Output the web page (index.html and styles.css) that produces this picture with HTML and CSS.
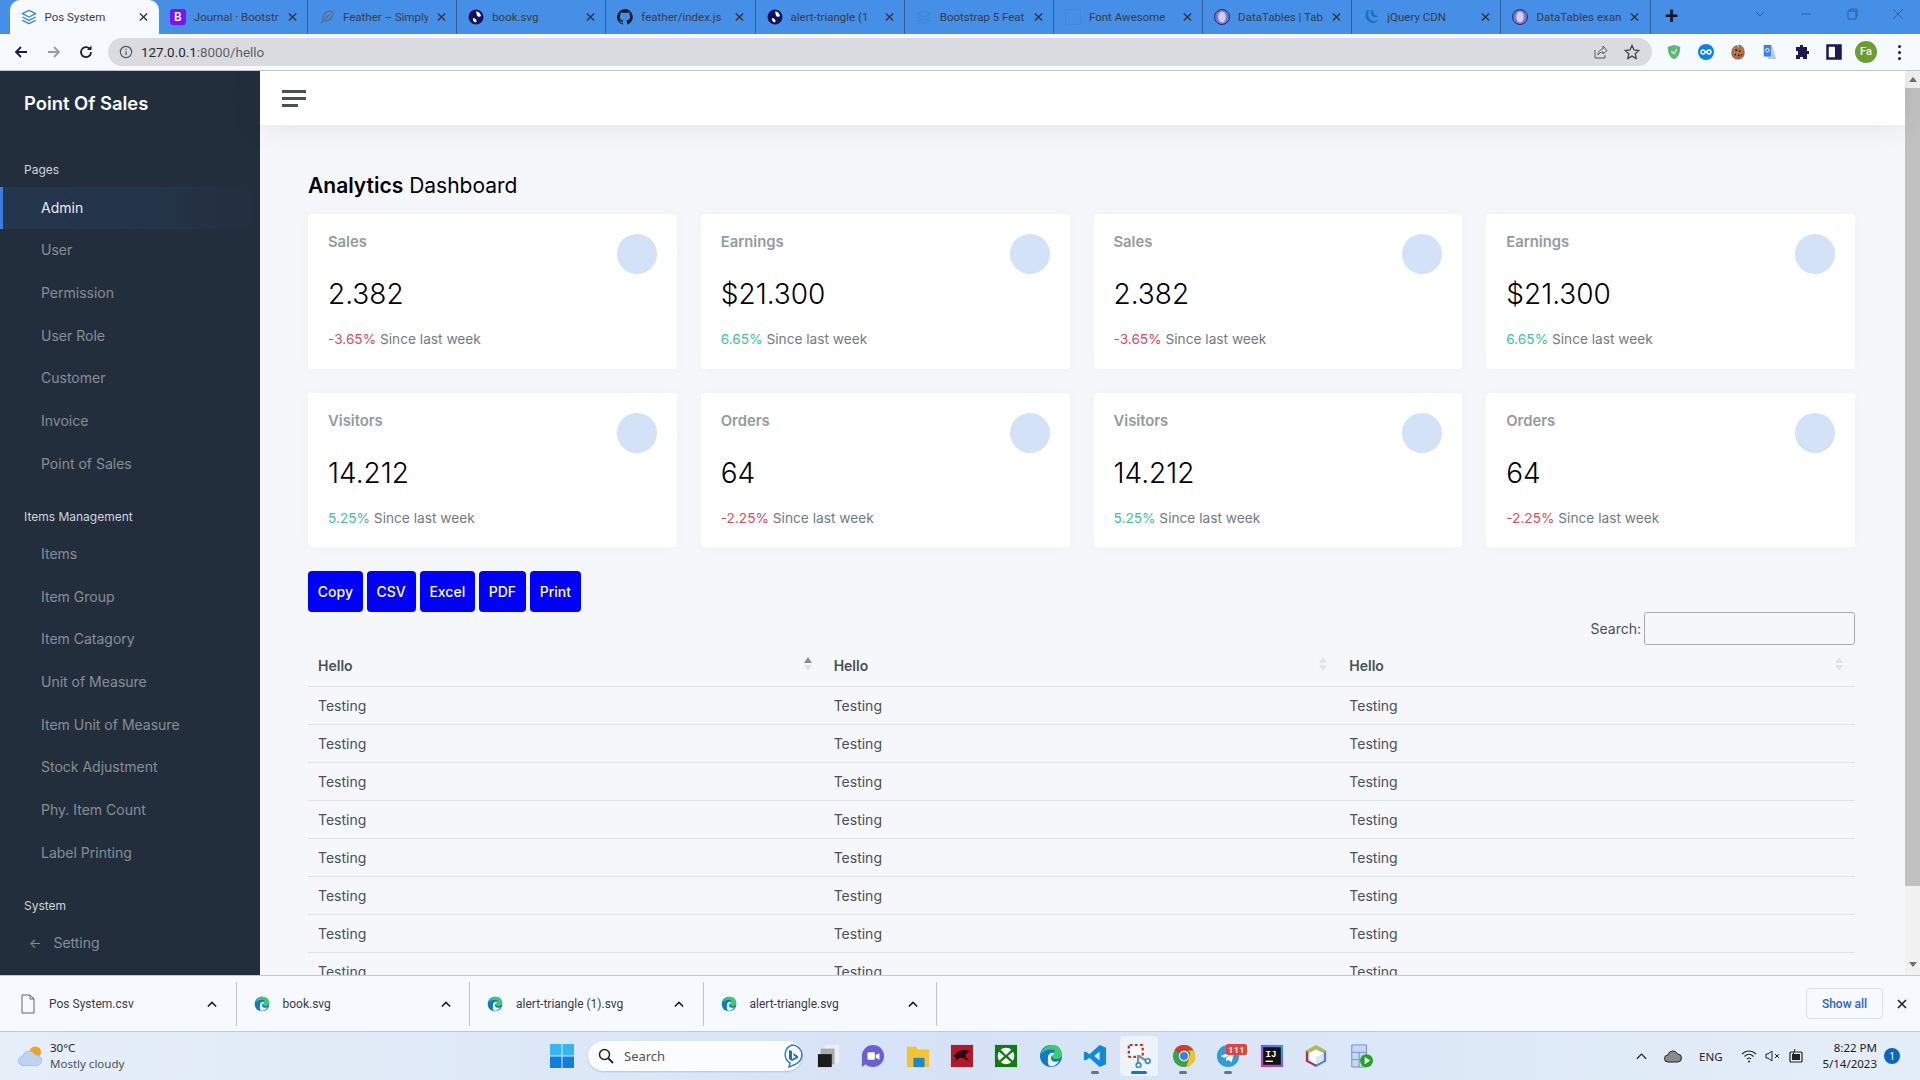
FILE: index.html
```html
<!DOCTYPE html>
<html lang="en">
<head>
  <meta charset="UTF-8" />
  <meta name="viewport" content="width=device-width, initial-scale=1.0" />
  <title>Pos System</title>
  <link rel="stylesheet" href="styles.css">
</head>
<body>
  <svg class="defs" width="0" height="0">
    <defs>
      <linearGradient id="g-ij" x1="0" y1="1" x2="1" y2="0"><stop offset="0" stop-color="#e8358a"/><stop offset=".5" stop-color="#7a5ce0"/><stop offset="1" stop-color="#2f9be8"/></linearGradient>
    </defs>
    <symbol id="i-layers" viewBox="0 0 24 24"><path d="M12 2 2 7l10 5 10-5zM2 12l10 5 10-5M2 17l10 5 10-5" fill="none" stroke="#3b87d8" stroke-width="2" stroke-linejoin="round"/></symbol>
    <symbol id="i-globe" viewBox="0 0 16 16"><circle cx="8" cy="8" r="7.5" fill="#14125e"/><path d="M8 2.500c2.500 0 4.800 1.800 5 4.500-1 1-2.500 1-3.500.2C8.500 6.400 8.600 4 8 2.500zM5 9c1.500 0 3 1 3.500 2.500.2.800-.3 1.800-1 2C5.500 13 4.500 11 5 9z" fill="#fff"/></symbol>
    <symbol id="i-dt" viewBox="0 0 16 16"><circle cx="8" cy="8" r="7.5" fill="#7a76c9" stroke="#2b2a63"/><ellipse cx="8" cy="8" rx="3.8" ry="5.5" fill="#cfcdf0"/></symbol>
    <symbol id="i-edge" viewBox="0 0 24 24"><circle cx="12" cy="12" r="11" fill="#0f7ac6"/><path d="M2 10C4 3 10 1 14 1c6 0 9 5 9 10 0 3-3 4-6 4-2 0-4-1-4-3 0-3 3-3 3-5-3-3-11-1-14 3z" fill="#41c96f"/><path d="M9 13c0-3 3-5 6-4 0 2-3 2-3 5s3 5 8 3c-2 4-6 6-9 5-3-1-2-6-2-9z" fill="#fff" opacity=".9"/></symbol>
    <symbol id="i-chev" viewBox="0 0 12 8"><path d="M1 7l5-5 5 5" fill="none" stroke="#1d1752" stroke-width="2"/></symbol>
    <symbol id="i-x" viewBox="0 0 10 10"><path d="M1 1l8 8M9 1l-8 8" fill="none" stroke="currentColor" stroke-width="1.6"/></symbol>
  </svg>

  <div class="tabstrip">
    <div class="tab tab-active">
      <svg class="tab-icon"><use href="#i-layers"/></svg>
      <span class="tab-text">Pos System</span><svg class="tab-x"><use href="#i-x"/></svg>
    </div>
    <div class="tab">
      <span class="tab-icon bs-icon">B</span>
      <span class="tab-text">Journal · Bootstr</span><svg class="tab-x"><use href="#i-x"/></svg>
    </div>
    <div class="tab">
      <svg class="tab-icon" viewBox="0 0 24 24"><path d="M20 4c-4-2-10 0-12 4-2 3-2 7-2 10l-3 3M6 18c4 0 8 0 11-3 3-3 5-8 3-11M9 15l7-7" fill="none" stroke="#666" stroke-width="1.6"/></svg>
      <span class="tab-text">Feather – Simply</span><svg class="tab-x"><use href="#i-x"/></svg>
    </div>
    <div class="tab">
      <svg class="tab-icon"><use href="#i-globe"/></svg>
      <span class="tab-text">book.svg</span><svg class="tab-x"><use href="#i-x"/></svg>
    </div>
    <div class="tab">
      <svg class="tab-icon" viewBox="0 0 16 16"><path fill="#1b1f23" d="M8 0a8 8 0 0 0-2.500 15.600c.4 0 .5-.2.5-.4v-1.400c-2.200.5-2.700-1-2.700-1-.4-.9-.9-1.200-.9-1.200-.7-.5.100-.5.100-.5.800.1 1.200.8 1.200.8.700 1.200 1.900.9 2.300.7.100-.5.300-.9.500-1.100-1.800-.2-3.600-.9-3.600-4 0-.9.300-1.600.8-2.100-.1-.2-.4-1 .1-2.100 0 0 .7-.2 2.200.8a7.600 7.600 0 0 1 4 0c1.500-1 2.200-.8 2.200-.8.400 1.100.2 1.900.1 2.100.5.600.8 1.300.8 2.100 0 3.100-1.900 3.700-3.700 3.900.3.300.6.800.6 1.500v2.200c0 .2.100.5.600.4A8 8 0 0 0 8 0z"/></svg>
      <span class="tab-text">feather/index.js</span><svg class="tab-x"><use href="#i-x"/></svg>
    </div>
    <div class="tab">
      <svg class="tab-icon"><use href="#i-globe"/></svg>
      <span class="tab-text">alert-triangle (1</span><svg class="tab-x"><use href="#i-x"/></svg>
    </div>
    <div class="tab">
      <svg class="tab-icon tab-icon-dim"><use href="#i-layers"/></svg>
      <span class="tab-text">Bootstrap 5 Feat</span><svg class="tab-x"><use href="#i-x"/></svg>
    </div>
    <div class="tab">
      <span class="tab-icon fa-icon"></span>
      <span class="tab-text">Font Awesome</span><svg class="tab-x"><use href="#i-x"/></svg>
    </div>
    <div class="tab">
      <svg class="tab-icon"><use href="#i-dt"/></svg>
      <span class="tab-text">DataTables | Tab</span><svg class="tab-x"><use href="#i-x"/></svg>
    </div>
    <div class="tab">
      <svg class="tab-icon" viewBox="0 0 16 16"><path d="M4 1C1 6 3 13 9 14c3 .5 5-1 6-3-3 2-7 1-9-2C5 6 5 3 6 1zM8 1c-1 3 0 6 3 7 1 .4 3 .2 4-1-3 0-5-3-5-6z" fill="#1a73b5"/></svg>
      <span class="tab-text">jQuery CDN</span><svg class="tab-x"><use href="#i-x"/></svg>
    </div>
    <div class="tab">
      <svg class="tab-icon"><use href="#i-dt"/></svg>
      <span class="tab-text">DataTables exan</span><svg class="tab-x"><use href="#i-x"/></svg>
    </div>
    <span class="tab-new">+</span>
    <div class="win-controls">
      <svg class="win-btn" viewBox="0 0 12 12"><path d="M2 4l4 4 4-4" fill="none" stroke="#2c5f9e"/></svg>
      <svg class="win-btn" viewBox="0 0 12 12"><path d="M1 6h10" stroke="#2c5f9e"/></svg>
      <svg class="win-btn" viewBox="0 0 12 12"><path d="M2 3h8v8H2zM4 3V1h7v7h-1" fill="none" stroke="#2c5f9e"/></svg>
      <svg class="win-btn" viewBox="0 0 12 12"><path d="M1 1l10 10M11 1L1 11" stroke="#2c5f9e"/></svg>
    </div>
  </div>

  <div class="toolbar">
    <svg class="nav-btn" viewBox="0 0 16 16"><path d="M14 8H3M8 3L3 8l5 5" fill="none" stroke="#1d1752" stroke-width="1.800"/></svg>
    <svg class="nav-btn" viewBox="0 0 16 16"><path d="M2 8h11M8 3l5 5-5 5" fill="none" stroke="#9a97b4" stroke-width="1.800"/></svg>
    <svg class="nav-btn" viewBox="0 0 16 16"><path d="M13 8a5 5 0 1 1-1.500-3.500" fill="none" stroke="#1d1752" stroke-width="1.800"/><path d="M13.500 1.500V6H9z" fill="#1d1752"/></svg>
    <div class="omnibox">
      <svg class="omni-info" viewBox="0 0 16 16"><circle cx="8" cy="8" r="6.500" fill="none" stroke="#55565c" stroke-width="1.300"/><path d="M8 7v4.500M8 4.300v1.400" stroke="#55565c" stroke-width="1.400"/></svg>
      <span class="omni-url">127.0.0.1<span class="omni-path">:8000/hello</span></span>
      <svg class="omni-share" viewBox="0 0 16 16"><path d="M3 6v8h10v-3M6 11c0-4 3-6 5-6V2l4 4.500L11 10V8c-2 0-4 1-5 3z" fill="none" stroke="#55565c"/></svg>
      <svg class="omni-star" viewBox="0 0 16 16"><path d="M8 1.500l2 4.500 4.800.5-3.600 3.200 1 4.800L8 12.100l-4.200 2.400 1-4.800L1.200 6.500 6 6z" fill="none" stroke="#44454b" stroke-width="1.300"/></svg>
    </div>
    <div class="extensions">
      <svg class="ext" viewBox="0 0 16 18"><path d="M8 1l7 2c0 7-2 12-7 14C3 15 1 10 1 3z" fill="#5cb874"/><path d="M5 8l3 3 3-5" fill="none" stroke="#d9f2e0" stroke-width="1.500"/></svg>
      <svg class="ext" viewBox="0 0 16 16"><circle cx="8" cy="8" r="8" fill="#0d7ff2"/><path d="M7 8a2 2 0 1 1-.7-1.500L9.700 9.500A2 2 0 1 0 9 8" fill="none" stroke="#fff" stroke-width="1.500"/></svg>
      <svg class="ext" viewBox="0 0 16 18"><path d="M9 1c5 1 6 6 6 9 0 4-3 7-7 7s-7-3-7-7c0-5 3-8 6-8 0 2 1 3 2 3z" fill="#b57648" stroke="#4b2c15" stroke-width=".6"/><g fill="#2b1608"><circle cx="6" cy="7" r="1.200"/><circle cx="10" cy="8" r="1"/><circle cx="5" cy="12" r="1"/><circle cx="9" cy="13" r="1.200"/><circle cx="12" cy="12" r=".8"/></g></svg>
      <svg class="ext" viewBox="0 0 16 18"><path d="M1 1h9l5 16H6l-1-3H1z" fill="#b4c9ee"/><path d="M1 1h8v13H1z" fill="#3f7fe8"/><circle cx="5" cy="7" r="2" fill="none" stroke="#fff"/></svg>
      <svg class="ext" viewBox="0 0 16 16"><path d="M6 1h3v2h4v4h2v3h-2v5H9v-2H6v2H2v-4h2V7H2V3h4z" fill="#1d1752"/></svg>
      <svg class="ext" viewBox="0 0 16 16"><rect x="1.500" y="1.500" width="13" height="13" fill="none" stroke="#1d1752" stroke-width="2.500"/><rect x="9" y="2" width="5" height="12" fill="#1d1752"/></svg>
      <span class="avatar">Fa</span>
      <span class="menu-dots"><i></i><i></i><i></i></span>
    </div>
  </div>

  <div class="page">
    <aside class="sidebar">
      <div class="brand">Point Of Sales</div>
      <div class="side-header">Pages</div>
      <a class="side-link active">Admin</a>
      <a class="side-link">User</a>
      <a class="side-link">Permission</a>
      <a class="side-link">User Role</a>
      <a class="side-link">Customer</a>
      <a class="side-link">Invoice</a>
      <a class="side-link">Point of Sales</a>
      <div class="side-header">Items Management</div>
      <a class="side-link">Items</a>
      <a class="side-link">Item Group</a>
      <a class="side-link">Item Catagory</a>
      <a class="side-link">Unit of Measure</a>
      <a class="side-link">Item Unit of Measure</a>
      <a class="side-link">Stock Adjustment</a>
      <a class="side-link">Phy. Item Count</a>
      <a class="side-link">Label Printing</a>
      <div class="side-header">System</div>
      <a class="side-link side-link-arrow"><span class="side-arrow">←</span>Setting</a>
    </aside>

    <div class="main">
      <nav class="navbar">
        <span class="hamburger"><i></i><i></i><i class="short"></i></span>
      </nav>
      <div class="content">
        <h1 class="title"><strong>Analytics</strong> Dashboard</h1>
        <div class="cards">
          <div class="card">
            <div class="card-head"><span class="card-title">Sales</span><span class="card-dot"></span></div>
            <div class="card-value">2.382</div>
            <div class="card-note"><span class="down">-3.65%</span> Since last week</div>
          </div>
          <div class="card">
            <div class="card-head"><span class="card-title">Earnings</span><span class="card-dot"></span></div>
            <div class="card-value">$21.300</div>
            <div class="card-note"><span class="up">6.65%</span> Since last week</div>
          </div>
          <div class="card">
            <div class="card-head"><span class="card-title">Sales</span><span class="card-dot"></span></div>
            <div class="card-value">2.382</div>
            <div class="card-note"><span class="down">-3.65%</span> Since last week</div>
          </div>
          <div class="card">
            <div class="card-head"><span class="card-title">Earnings</span><span class="card-dot"></span></div>
            <div class="card-value">$21.300</div>
            <div class="card-note"><span class="up">6.65%</span> Since last week</div>
          </div>
          <div class="card">
            <div class="card-head"><span class="card-title">Visitors</span><span class="card-dot"></span></div>
            <div class="card-value">14.212</div>
            <div class="card-note"><span class="up">5.25%</span> Since last week</div>
          </div>
          <div class="card">
            <div class="card-head"><span class="card-title">Orders</span><span class="card-dot"></span></div>
            <div class="card-value">64</div>
            <div class="card-note"><span class="down">-2.25%</span> Since last week</div>
          </div>
          <div class="card">
            <div class="card-head"><span class="card-title">Visitors</span><span class="card-dot"></span></div>
            <div class="card-value">14.212</div>
            <div class="card-note"><span class="up">5.25%</span> Since last week</div>
          </div>
          <div class="card">
            <div class="card-head"><span class="card-title">Orders</span><span class="card-dot"></span></div>
            <div class="card-value">64</div>
            <div class="card-note"><span class="down">-2.25%</span> Since last week</div>
          </div>
        </div>

        <div class="dt-buttons">
          <button>Copy</button><button>CSV</button><button>Excel</button><button>PDF</button><button>Print</button>
        </div>
        <div class="dt-search"><label>Search:</label><input type="text"></div>

        <table class="dt">
          <thead>
            <tr>
              <th><div class="th-in">Hello<span class="sort sort-asc"><i></i><b></b></span></div></th>
              <th><div class="th-in">Hello<span class="sort"><i></i><b></b></span></div></th>
              <th><div class="th-in">Hello<span class="sort"><i></i><b></b></span></div></th>
            </tr>
          </thead>
          <tbody>
            <tr><td>Testing</td><td>Testing</td><td>Testing</td></tr>
            <tr><td>Testing</td><td>Testing</td><td>Testing</td></tr>
            <tr><td>Testing</td><td>Testing</td><td>Testing</td></tr>
            <tr><td>Testing</td><td>Testing</td><td>Testing</td></tr>
            <tr><td>Testing</td><td>Testing</td><td>Testing</td></tr>
            <tr><td>Testing</td><td>Testing</td><td>Testing</td></tr>
            <tr><td>Testing</td><td>Testing</td><td>Testing</td></tr>
            <tr><td>Testing</td><td>Testing</td><td>Testing</td></tr>
          </tbody>
        </table>
      </div>
    </div>

    <div class="scrollbar">
      <span class="sb-up"></span>
      <span class="sb-thumb"></span>
      <span class="sb-down"></span>
    </div>
  </div>

  <div class="downloads">
    <div class="dl">
      <svg class="dl-icon" viewBox="0 0 14 20"><path d="M1 1h8l4 4v14H1zM9 1v4h4" fill="none" stroke="#66666c"/></svg>
      <span class="dl-name">Pos System.csv</span><svg class="dl-chev"><use href="#i-chev"/></svg>
    </div>
    <div class="dl">
      <svg class="dl-icon"><use href="#i-edge"/></svg>
      <span class="dl-name">book.svg</span><svg class="dl-chev"><use href="#i-chev"/></svg>
    </div>
    <div class="dl">
      <svg class="dl-icon"><use href="#i-edge"/></svg>
      <span class="dl-name">alert-triangle (1).svg</span><svg class="dl-chev"><use href="#i-chev"/></svg>
    </div>
    <div class="dl">
      <svg class="dl-icon"><use href="#i-edge"/></svg>
      <span class="dl-name">alert-triangle.svg</span><svg class="dl-chev"><use href="#i-chev"/></svg>
    </div>
    <button class="show-all">Show all</button>
    <svg class="dl-close"><use href="#i-x"/></svg>
  </div>

  <div class="taskbar">
    <div class="weather">
      <svg class="weather-icon" viewBox="0 0 26 24"><circle cx="18" cy="8" r="6" fill="#f5a31e"/><path d="M6 22a5 5 0 0 1-1-10 7 7 0 0 1 13-1 5.500 5.500 0 0 1 2 11z" fill="#bcd4f2" stroke="#8fb4e4" stroke-width=".7"/></svg>
      <div class="weather-text"><div>30°C</div><div class="weather-sub">Mostly cloudy</div></div>
    </div>
    <svg class="start" viewBox="0 0 24 24"><path fill="#35b8f2" d="M0 0h11.500v11.500H0zM12.500 0H24v11.500H12.500z"/><path fill="#0f80d6" d="M0 12.500h11.500V24H0zM12.500 12.500H24V24H12.500z"/></svg>
    <div class="task-search">
      <svg class="ts-glass" viewBox="0 0 16 16"><circle cx="6.500" cy="6.500" r="5" fill="none" stroke="#222" stroke-width="1.500"/><path d="M10 10l5 5" stroke="#222" stroke-width="1.800"/></svg>
      <span class="ts-text">Search</span>
      <svg class="ts-bing" viewBox="0 0 22 24"><path d="M11 1a10 10 0 0 1 3 19.500L8 23l1-4A10 10 0 0 1 11 1z" fill="#fff" stroke="#2b7fd8" stroke-width="1.500"/><path d="M8 6l3 1v8l4-2-2-1-1-3 5 3v2l-6 3-3-2z" fill="#1b6fc9"/></svg>
    </div>
    <div class="task-icons">
      <span class="ti"><svg viewBox="0 0 26 26"><rect x="8" y="1" width="16" height="20" rx="1" fill="#eee"/><rect x="4" y="5" width="15" height="17" fill="#aaa"/><rect x="1" y="11" width="15" height="14" fill="#1c1c1c"/></svg></span>
      <span class="ti"><svg viewBox="0 0 26 26"><path d="M13 1a12 12 0 0 1 0 24c-4 0-6-1-8-3L1 25V13A12 12 0 0 1 13 1z" fill="#6a5fd8"/><rect x="7" y="9" width="8" height="8" rx="1" fill="#fff"/><path d="M16 12l4-2v7l-4-2z" fill="#fff"/></svg></span>
      <span class="ti"><svg viewBox="0 0 26 26"><path d="M1 3h10l2 3h12v19H1z" fill="#f4c430"/><rect x="8" y="15" width="12" height="10" fill="#1f86d0"/></svg></span>
      <span class="ti"><svg viewBox="0 0 26 26"><rect x="1" y="1" width="24" height="24" fill="#b01a2b"/><path d="M4 13c5-6 9-8 18-5-4 1-5 3-5 5s3 4 4 6c-4-2-6-4-9-4s-4 3-6 4c1-3 1-4-2-6z" fill="#2a0a10"/></svg></span>
      <span class="ti"><svg viewBox="0 0 26 26"><rect x="1" y="1" width="24" height="24" fill="#107c10"/><circle cx="13" cy="13" r="9" fill="#fff"/><path d="M7 6l6 6 6-6 2 2-6 5 6 6-2 1-6-5-6 5-2-1 6-6-6-5z" fill="#107c10"/></svg></span>
      <span class="ti"><svg viewBox="0 0 24 24"><use href="#i-edge"/></svg></span>
      <span class="ti ti-open"><svg viewBox="0 0 26 26"><path d="M18 1l7 3v18l-7 3L7 15l-4 3-2-1V9l2-1 4 3zM18 8l-6 5 6 5z" fill="#0f8ad6"/></svg></span>
      <span class="ti ti-current"><svg viewBox="0 0 26 26"><rect x="2" y="1" width="15" height="13" rx="1" fill="#fff" stroke="#c8301f" stroke-width="2.500" stroke-dasharray="3 2.500"/><path d="M13 13l9 6M12 12v9" stroke="#8a9098" stroke-width="2.500"/><circle cx="22.500" cy="18.500" r="2.500" fill="#fff" stroke="#2a8fd8" stroke-width="1.800"/><circle cx="12.500" cy="23" r="2.500" fill="#fff" stroke="#2a8fd8" stroke-width="1.800"/></svg></span>
      <span class="ti ti-open"><svg viewBox="0 0 26 26"><circle cx="13" cy="13" r="12" fill="#3aa34a"/><path d="M13 1a12 12 0 0 1 10.400 6H13a6 6 0 0 0-5.500 3.500L3 6A12 12 0 0 1 13 1z" fill="#e0372d"/><path d="M23.400 7a12 12 0 0 1-8 17.800L19 14a6 6 0 0 0-1-7z" fill="#fcc419"/><circle cx="13" cy="13" r="5" fill="#3c7fe8" stroke="#fff" stroke-width="1.200"/></svg></span>
      <span class="ti ti-open"><svg viewBox="0 0 26 26"><circle cx="13" cy="13" r="12" fill="#2b9ed8"/><path d="M5 13l15-6-3 13-4-3-2 2v-4l5-4-7 4z" fill="#fff"/></svg><em class="ti-badge">111</em></span>
      <span class="ti"><svg viewBox="0 0 26 26"><rect x="1" y="1" width="24" height="24" fill="url(#g-ij)"/><rect x="3.500" y="3.500" width="19" height="19" fill="#111"/><text x="6" y="14" font-size="10" font-weight="700" fill="#fff" font-family="Liberation Mono, monospace">IJ</text><rect x="6" y="18" width="8" height="1.500" fill="#fff"/></svg></span>
      <span class="ti"><svg viewBox="0 0 26 26"><path d="M13 1l11 6-3 3-8-4-8 4-3-3z" fill="#a8bd52"/><path d="M2 7l3 3v8l8 4v3L2 19z" fill="#b3314e"/><path d="M24 7l-3 3v8l-8 4v3l11-6z" fill="#4f86d0"/><path d="M13 6l8 4v8l-8 4-8-4v-8z" fill="#fff"/><path d="M13 14l8-4v8l-8 4z" fill="#dfe3ea"/></svg></span>
      <span class="ti"><svg viewBox="0 0 26 26"><path d="M3 1h16v24H3z" fill="#c8d6f0" stroke="#6f8fc9"/><path d="M3 9h16M3 17h16M11 9v16" stroke="#6f8fc9"/><circle cx="19" cy="18" r="7" fill="#1fa51f"/><path d="M17 14l6 4-6 4z" fill="#fff"/></svg></span>
    </div>
    <div class="tray">
      <svg class="tray-caret" viewBox="0 0 12 8"><path d="M1 7l5-5 5 5" fill="none" stroke="#222" stroke-width="1.300"/></svg>
      <svg class="tray-cloud" viewBox="0 0 18 14"><path d="M4 13a3.500 3.500 0 0 1 0-7 5 5 0 0 1 9.500-1 4 4 0 0 1 0 8z" fill="#8b8b8b" stroke="#222"/></svg>
      <span class="tray-lang">ENG</span>
      <svg class="tray-sys" viewBox="0 0 16 14"><path d="M1 5c4-4 10-4 14 0M3.500 7.500c3-3 6-3 9 0M6 10c1.500-1.500 2.500-1.500 4 0" fill="none" stroke="#222" stroke-width="1.100"/><circle cx="8" cy="12.500" r="1" fill="#222"/></svg>
      <svg class="tray-sys" viewBox="0 0 16 14"><path d="M1 5h2l4-3v10L3 9H1z" fill="none" stroke="#222"/><path d="M10 5l4 4M14 5l-4 4" stroke="#222"/></svg>
      <svg class="tray-sys" viewBox="0 0 16 14"><rect x="1" y="3" width="12" height="10" rx="1" fill="none" stroke="#222" stroke-width="1.200"/><rect x="3" y="5" width="8" height="6" fill="#222"/><path d="M6 0L4 6h3l-1 4" fill="none" stroke="#222"/></svg>
      <div class="clock"><div>8:22 PM</div><div>5/14/2023</div></div>
      <span class="notif">1</span>
    </div>
  </div>
</body>
</html>
```

FILE: styles.css
```css
* { box-sizing: border-box; }
html, body { margin: 0; height: 100%; overflow: hidden; }
body { font-family: Inter, "Liberation Sans", sans-serif; background: #f5f7fb; color: #495057; display: flex; flex-direction: column; height: 1080px; }
.defs { position: absolute; }

/* browser tabs */
.tabstrip { height: 34px; background: #468fe6; display: flex; padding-left: 9.6px; font-family: Roboto, sans-serif; font-size: 11.5px; color: #3a3c44; flex: none; }
.tab { width: 149.2px; height: 34px; display: flex; align-items: center; padding-left: 11px; border-right: 1px solid #2f5f9c; }
.tab-active { background: #f6f9fe; border-right: 0; border-radius: 10px 10px 0 0; }
.tab-icon { width: 16px; height: 16px; flex: none; margin-right: 8px; }
.tab-icon-dim { opacity: .75; }
.bs-icon { background: #7a12f5; color: #fff; border-radius: 3px; font-size: 12px; line-height: 16px; text-align: center; font-weight: 500; }
.fa-icon { border: 1px solid #3f7cc8; opacity: .4; }
.tab-text { width: 85px; white-space: nowrap; overflow: hidden; flex: none; }
.tab-x { width: 9px; height: 10px; margin-left: 9px; color: #33343a; flex: none; }
.tab-new { width: 40px; text-align: center; font-size: 24px; font-weight: 500; color: #16161c; line-height: 32px; margin-left: 1px; }
.win-controls { margin-left: auto; display: flex; gap: 34px; padding: 8px 16px 0 0; }
.win-btn { width: 12px; height: 12px; }

/* url bar */
.toolbar { height: 36px; background: #f6f9fe; display: flex; align-items: center; padding: 0 0 0 13px; flex: none; }
.nav-btn { width: 16px; height: 16px; margin-right: 16.5px; flex: none; }
.omnibox { width: 1544px; height: 28px; margin-left: -2.5px; background: #dadbe0; border-radius: 14px; display: flex; align-items: center; padding: 0 12px 0 11px; font-family: Roboto, sans-serif; font-size: 13.4px; color: #26272c; }
.omni-info { width: 14px; height: 14px; margin-right: 8px; }
.omni-path { color: #5e5f66; }
.omni-share { width: 16px; height: 16px; margin-left: auto; margin-right: 16px; }
.omni-star { width: 16px; height: 16px; }
.extensions { display: flex; align-items: center; padding-left: 14px; }
.ext { width: 16px; height: 16px; margin-right: 16px; flex: none; }
.avatar { width: 22px; height: 22px; border-radius: 50%; background: #6a9e2f; color: #fff; font: 500 11px Roboto, sans-serif; line-height: 22px; text-align: center; margin-left: -3px; }
.menu-dots { display: flex; flex-direction: column; gap: 3px; margin-left: 21px; }
.menu-dots i { width: 3px; height: 3px; background: #1d1752; border-radius: 50%; }

/* page */
.page { flex: none; height: 905px; display: flex; overflow: hidden; border-top: 1px solid #c5c5d2; }
.sidebar { width: 260px; flex: none; background: #222e3c; color: #ced4da; }
.brand { font-size: 18.4px; font-weight: 600; color: #f8f9fa; line-height: 28px; padding: 18px 24px 43px; }
.side-header { font-size: 12px; line-height: 20.5px; padding: 21.2px 24px 6px; color: #ced4da; }
.brand + .side-header { padding-top: 0; }
.side-link { display: block; height: 42.7px; line-height: 42.7px; padding-left: 41px; font-size: 14px; color: rgba(233, 236, 239, .5); border-left: 3px solid transparent; text-indent: -3px; }
.side-link.active { color: #e9ecef; border-left-color: #3b7ddd; background: linear-gradient(90deg, rgba(59, 125, 221, .1), rgba(59, 125, 221, .0875) 50%, rgba(0, 0, 0, 0)); }
.side-link-arrow { padding-left: 29px; }
.side-arrow { margin-right: 12px; font-size: 13px; }

.main { flex: 1; min-width: 0; }
.navbar { height: 54px; background: #fff; box-shadow: 0 0 32px rgba(33, 37, 41, .1); display: flex; align-items: center; padding-left: 22px; position: relative; }
.hamburger { display: flex; flex-direction: column; gap: 4px; }
.hamburger i { width: 24px; height: 3px; background: #495057; display: block; }
.hamburger .short { width: 16px; }
.content { padding: 47.5px 50px 0 48px; }
.title { margin: 0 0 16.5px; font-size: 21px; font-weight: 400; line-height: 25px; color: #000; }
.title strong { font-weight: 600; }
.cards { display: grid; grid-template-columns: repeat(4, 1fr); gap: 24px; }
.card { background: #fff; border-radius: 4px; box-shadow: 0 0 14px rgba(33, 37, 41, .03); padding: 20px 20px 18.5px; height: 154.5px; }
.card-head { display: flex; justify-content: space-between; height: 40px; }
.card-title { font-size: 14.8px; font-weight: 600; line-height: 16px; color: #939ba2; }
.card-dot { width: 40px; height: 40px; border-radius: 50%; background: #d3e2f7; }
.card-value { font-size: 28px; font-weight: 300; line-height: 34px; color: #000; margin-top: 3px; }
.card-note { font-size: 13.7px; line-height: 22px; margin-top: 17px; color: #727b84; }
.down { color: #e04b5a; }
.up { color: #3cc4a0; }

.dt-buttons { display: flex; gap: 4px; margin-top: 24px; }
.dt-buttons button { height: 41px; padding: 0 9.8px; border: 0; border-radius: 4px; background: #00f; color: #fff; font: 500 14px Inter, sans-serif; }
.dt-search { display: flex; justify-content: flex-end; align-items: center; height: 33px; font-size: 14px; }
.dt-search label { margin-right: 3px; }
.dt-search input { width: 211px; height: 33px; border: 1px solid #aaa; border-radius: 3px; background: transparent; }
.dt { width: 100%; border-collapse: collapse; table-layout: fixed; font-size: 14px; }
.dt th { height: 41px; padding: 0 10px; text-align: left; font-weight: 600; border-bottom: 1px solid #dee2e6; color: #495057; }
.th-in { display: flex; justify-content: space-between; align-items: center; }
.sort { display: flex; flex-direction: column; gap: 2px; margin-right: 2px; margin-top: -2px; }
.sort i, .sort b { width: 0; height: 0; border-left: 4px solid transparent; border-right: 4px solid transparent; }
.sort i { border-bottom: 6px solid #e1e3e6; }
.sort b { border-top: 6px solid #e1e3e6; }
.sort-asc i { border-bottom-color: #8b8f94; }
.dt td { height: 38px; padding: 0 10px; border-bottom: 1px solid #dee2e6; }

.scrollbar { width: 15px; flex: none; background: #f1f1f1; display: flex; flex-direction: column; align-items: center; padding-top: 6px; }
.sb-up { width: 0; height: 0; border-left: 4px solid transparent; border-right: 4px solid transparent; border-bottom: 5px solid #6f6f6f; }
.sb-thumb { width: 15px; height: 798px; background: #c1c1c1; margin-top: 6px; }
.sb-down { width: 0; height: 0; border-left: 4px solid transparent; border-right: 4px solid transparent; border-top: 5px solid #6f6f6f; margin-top: 76px; }

/* downloads */
.downloads { height: 57px; flex: none; background: #f6f9fe; border-top: 1px solid #c5c9d2; border-bottom: 1px solid #c5c9d2; display: flex; align-items: center; padding-left: 3px; font-family: Roboto, sans-serif; font-size: 12px; color: #3a3b42; }
.dl { width: 233.5px; height: 44px; display: flex; align-items: center; border-right: 1px solid #c2c4cb; padding-left: 17px; }
.dl-icon { width: 16px; height: 20px; margin-right: 13px; flex: none; }
.dl-name { width: 158px; white-space: nowrap; }
.dl-chev { width: 10px; height: 8px; flex: none; }
.show-all { margin-left: auto; width: 77px; height: 31px; border: 1px solid #dcdfe6; border-radius: 4px; background: transparent; color: #2b63d9; font: 500 12px Roboto, sans-serif; }
.dl-close { width: 10px; height: 10px; margin: 0 13px 0 14px; color: #1d1752; flex: none; }

/* windows taskbar */
.taskbar { height: 48px; flex: none; background: linear-gradient(90deg, #e6eff8, #d6e2f6 50%, #e4eef8); display: flex; align-items: center; font-family: "Noto Sans", sans-serif; font-size: 11.5px; color: #222; }
.weather { display: flex; align-items: center; width: 550px; padding-left: 18px; }
.weather-icon { width: 25px; height: 24px; margin-right: 7px; }
.weather-text { line-height: 16px; }
.weather-sub { color: #4c5057; }
.start { width: 24px; height: 24px; flex: none; }
.task-search { width: 214px; height: 30px; margin-left: 14px; border-radius: 15px; background: #fbfcfe; box-shadow: 0 1px 2px rgba(0, 0, 0, .15); display: flex; align-items: center; padding-left: 10px; font-size: 13px; color: #555; }
.ts-glass { width: 16px; height: 16px; margin-right: 10px; }
.ts-bing { width: 22px; height: 24px; margin-left: auto; margin-right: -1px; }
.task-icons { display: flex; align-items: center; margin-left: 5px; }
.ti { width: 44.3px; height: 40px; display: flex; align-items: center; justify-content: center; position: relative; }
.ti svg { width: 24px; height: 24px; }
.ti-open::after { content: ""; position: absolute; bottom: 2px; left: 18px; width: 8px; height: 3px; border-radius: 2px; background: #6f7277; }
.ti-current { width: 38.3px; margin: 0 3px; background: #eef2fb; border-radius: 4px; }
.ti-current::after { content: ""; position: absolute; bottom: 2px; left: 11px; width: 16px; height: 3px; border-radius: 2px; background: #0a78d7; }
.ti-badge { position: absolute; top: 8px; right: 3px; background: #e8403a; color: #fff; font-style: normal; font-size: 9px; line-height: 11px; padding: 0 2px; border-radius: 2px; font-weight: 600; letter-spacing: .5px; }
.tray { display: flex; align-items: center; margin-left: auto; padding-right: 20px; }
.tray-caret { width: 11px; height: 8px; margin-right: 17px; }
.tray-cloud { width: 18px; height: 14px; margin-right: 17px; }
.tray-lang { margin-right: 18px; width: 24px; }
.tray-sys { width: 16px; height: 14px; margin-right: 8px; }
.clock { text-align: right; line-height: 16px; width: 64px; }
.notif { width: 16px; height: 16px; border-radius: 50%; background: #0a66c2; color: #fff; text-align: center; line-height: 16px; font-size: 10px; margin-left: 7px; }
```
